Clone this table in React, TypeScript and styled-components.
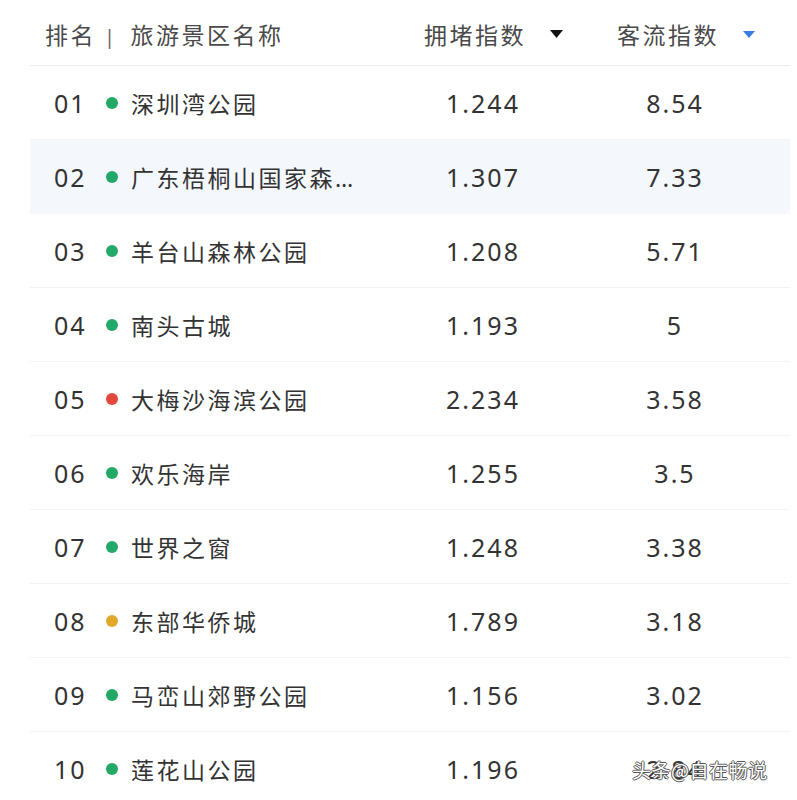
import React from "react";
import styled, { createGlobalStyle } from "styled-components";

const GlobalStyle = createGlobalStyle`
  body {
    margin: 0;
    background: #fff;
    font-family: "Noto Sans", "Noto Sans CJK SC", sans-serif;
  }
`;

const Cols = "75px 280px 196px 188px 1fr";

type Level = "ok" | "busy" | "warn";

interface Spot {
  rank: string;
  name: string;
  jam: string;
  flow: string;
  level: Level;
}

const spots: Spot[] = [
  { rank: "01", name: "深圳湾公园", jam: "1.244", flow: "8.54", level: "ok" },
  { rank: "02", name: "广东梧桐山国家森林公园", jam: "1.307", flow: "7.33", level: "ok" },
  { rank: "03", name: "羊台山森林公园", jam: "1.208", flow: "5.71", level: "ok" },
  { rank: "04", name: "南头古城", jam: "1.193", flow: "5", level: "ok" },
  { rank: "05", name: "大梅沙海滨公园", jam: "2.234", flow: "3.58", level: "busy" },
  { rank: "06", name: "欢乐海岸", jam: "1.255", flow: "3.5", level: "ok" },
  { rank: "07", name: "世界之窗", jam: "1.248", flow: "3.38", level: "ok" },
  { rank: "08", name: "东部华侨城", jam: "1.789", flow: "3.18", level: "warn" },
  { rank: "09", name: "马峦山郊野公园", jam: "1.156", flow: "3.02", level: "ok" },
  { rank: "10", name: "莲花山公园", jam: "1.196", flow: "2.84", level: "ok" },
];

const dotColors: Record<Level, string> = {
  ok: "#22a867",
  busy: "#e4483a",
  warn: "#e2a829",
};

const Page = styled.div`
  position: relative;
  width: 797px;
  height: 800px;
  overflow: hidden;
  padding-left: 30px;
  box-sizing: border-box;
`;

const Table = styled.div`
  width: 760px;
`;

const HeadRow = styled.div`
  display: grid;
  grid-template-columns: ${Cols};
  height: 66px;
  align-items: center;
  padding-top: 3px;
  box-sizing: border-box;
  border-bottom: 1px solid #e9ecf0;
  color: #4a4a4a;
  font-size: 23px;
  letter-spacing: 2.5px;
`;

const HeadCell = styled.div<{ $pad: number }>`
  display: flex;
  align-items: center;
  padding-left: ${(p) => p.$pad}px;
  white-space: nowrap;
`;

const Bar = styled.span`
  font-size: 20px;
  color: #666;
  margin-left: -1px;
  margin-right: 13px;
  position: relative;
  top: 2px;
`;

const SortArrow = styled.svg`
  margin-left: 24px;
  flex: none;
`;

const Row = styled.div<{ $hl?: boolean }>`
  display: grid;
  grid-template-columns: ${Cols};
  height: 74px;
  align-items: center;
  box-sizing: border-box;
  background: ${(p) => (p.$hl ? "#f4f7fc" : "#fff")};
  border-bottom: 1px solid ${(p) => (p.$hl ? "#f4f7fc" : "#f1f3f5")};
  color: #333;
  font-size: 25px;
  letter-spacing: 2px;
`;

const Rank = styled.div`
  padding-left: 24px;
`;

const NameCell = styled.div`
  display: flex;
  align-items: center;
  min-width: 0;
`;

const Dot = styled.span<{ $level: Level }>`
  flex: none;
  width: 12px;
  height: 12px;
  border-radius: 50%;
  margin-left: 1px;
  margin-right: 13px;
  background: ${(p) => dotColors[p.$level]};
`;

const Name = styled.span`
  font-size: 23px;
  letter-spacing: 2.5px;
  white-space: nowrap;
  overflow: hidden;
  text-overflow: ellipsis;
  max-width: 236px;
`;

const Value = styled.div`
  text-align: center;
`;

const Watermark = styled.div`
  position: absolute;
  left: 632px;
  top: 756px;
  font-family: "Noto Sans CJK SC", sans-serif;
  font-size: 19px;
  color: #fff;
  letter-spacing: 0.5px;
  text-shadow: -1px 0 #555, 1px 0 #555, 0 -1px #555, 0 1px #555;
`;

export default function App() {
  return (
    <Page>
      <GlobalStyle />
      <Table>
        <HeadRow>
          <HeadCell $pad={15}>排名</HeadCell>
          <HeadCell $pad={0}>
            <Bar>|</Bar>旅游景区名称
          </HeadCell>
          <HeadCell $pad={39}>
            拥堵指数
            <SortArrow width="13" height="8" viewBox="0 0 13 8">
              <path d="M0 0 L13 0 L6.5 8 Z" fill="#111" />
            </SortArrow>
          </HeadCell>
          <HeadCell $pad={36}>
            客流指数
            <SortArrow width="12" height="7" viewBox="0 0 12 7">
              <path d="M0 0 L12 0 L6 7 Z" fill="#3a7de0" />
            </SortArrow>
          </HeadCell>
          <div />
        </HeadRow>
        {spots.map((s, i) => (
          <Row key={s.rank} $hl={i === 1}>
            <Rank>{s.rank}</Rank>
            <NameCell>
              <Dot $level={s.level} />
              <Name>{s.name}</Name>
            </NameCell>
            <Value>{s.jam}</Value>
            <Value>{s.flow}</Value>
            <div />
          </Row>
        ))}
      </Table>
      <Watermark>头条@自在畅说</Watermark>
    </Page>
  );
}
